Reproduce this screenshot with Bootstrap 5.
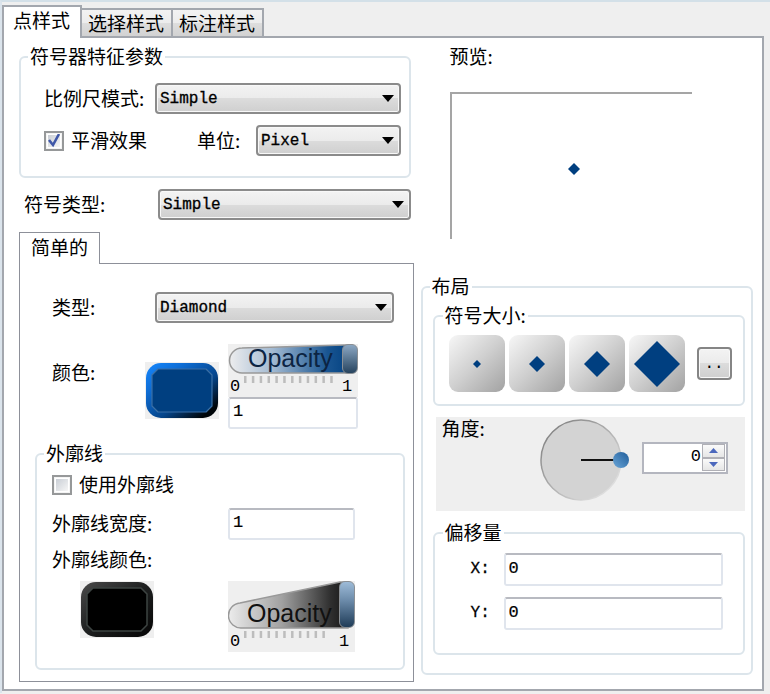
<!DOCTYPE html>
<html lang="zh-CN">
<head>
<meta charset="utf-8">
<meta name="viewport" content="width=device-width, initial-scale=1">
<title>点样式</title>
<link href="https://cdn.jsdelivr.net/npm/bootstrap@5.3.0/dist/css/bootstrap.min.css" rel="stylesheet">
<style>
  :root { --edge: #a3a7ae; --soft: #dce5eb; --ink: #003f80; --mono: "Liberation Mono", "Noto Sans CJK SC", monospace; }
  body { background: #efefef; color: #000; font: 19px/22px "Noto Sans CJK SC", sans-serif; border-left: 2px solid #dbe4ec; border-top: 2px solid #d3e0e8; padding: 3px 6px 2px 0; }
  button { color: #000; }
  label { padding-bottom: 2px; }

  .tab-btn { border: 2px solid var(--edge); border-bottom: 0; border-left-width: 0; background: linear-gradient(#f3f3f3, #ececec 50%, #dedede 50%, #d2d2d2); height: 28px; padding: 0 7px 0 6px; line-height: 24px; }
  .tab-btn.is-active { background: #fff; border-left-width: 2px; height: 33px; margin-bottom: -2px; padding: 0 10px 5px 9px; }
  .page { background: #fff; border: 2px solid var(--edge); padding: 7px 9px 7px 15px; display: grid; grid-template-columns: minmax(0, 394fr) minmax(0, 332fr); column-gap: 7px; }

  .group { border: 2px solid var(--soft); border-radius: 6px; padding: 0 8px 0 7px; min-width: 0; margin: 0; }
  .group > legend { float: none; width: auto; font-size: 19px; line-height: 22px; padding: 0 2px 2px; margin: 0; }
  .symbolizer { margin-right: 3px; }
  .symbolizer-body { padding: 14px 0 20px 16px; row-gap: 11px; }
  .type-row { margin: 11px 3px 0 0; padding-left: 5px; }
  .w-scale { width: 111px; } .w-smooth { width: 153px; } .w-unit { width: 59px; }
  .w-type { width: 134px; } .w-shape { width: 103px; } .w-color { width: 93px; } .w-line { width: 176px; }

  .drop { appearance: none; flex: 1 1 0; min-width: 0; height: 31px; border: 2px solid #8b8b8b; border-radius: 4px; padding: 0 24px 0 3px; font: 16px/24px var(--mono); color: #000; -webkit-text-stroke: .3px #000;
    background: url("data:image/svg+xml,%3Csvg xmlns='http://www.w3.org/2000/svg' width='12' height='7'%3E%3Cpath d='M0 0h12L6 7z'/%3E%3C/svg%3E") no-repeat right 5px center, linear-gradient(#f3f3f3, #ebebeb 50%, #dcdcdc 50%, #cfcfcf); box-shadow: inset 0 0 0 1px #f8f8f8; }
  .tick { appearance: none; flex: none; width: 20px; height: 20px; margin: 0; border: 2px solid #969899; background: linear-gradient(135deg, #c9ced5, #f6f6f6) content-box; padding: 2px; box-shadow: inset 0 0 0 1px #f4f4f4; }
  .tick:checked { background: url("data:image/svg+xml,%3Csvg xmlns='http://www.w3.org/2000/svg' viewBox='0 0 16 16'%3E%3Cpath d='M3 7l4 5 6-11' fill='none' stroke='%233f57a8' stroke-width='2.6'/%3E%3C/svg%3E") center / 16px no-repeat, linear-gradient(135deg, #c9ced5, #f6f6f6) content-box; }
  .tick + label { margin-left: 7px; }
  .field { border: 2px solid #e0e5ed; border-top-color: #b8bac1; border-radius: 3px; padding: 0 3px 3px; height: 32px; font: 17px/24px var(--mono); color: #000; background: #fff; min-width: 0; -webkit-text-stroke: .2px #000; }

  .inner-tab { background: #fff; border: 1px solid #8d9099; border-bottom: 0; width: 81px; height: 32px; margin: 12px 0 -1px; position: relative; padding: 0 0 3px; }
  .inner-page { border: 1px solid #8d9099; padding: 28px 8px 11px 15px; }
  .shape-row { padding: 0 11px 0 17px; }
  .color-row { padding: 21px 0 13px 17px; }
  .color-row > label { padding-top: 17px; }
  .color-row > .swatch { margin: 18px 9px 0 0; }
  .swatch { border: 0; padding: 0; background: #efefef; width: 74px; height: 57px; flex: none; }
  .swatch svg, .fader svg, .size-btn svg { display: block; }
  .outline-body { padding: 7px 0 16px 8px; }
  .row-width { margin-top: 11px; } .row-lc { margin-top: 8px; } .row-fader { margin: 9px 0 0 28px; }
  .row-fader .swatch { margin-right: 74px; }
  .num-130 { width: 130px; } .num-127 { width: 127px; }

  .fader { position: relative; background: #efefef; }
  .fader input { appearance: none; position: absolute; left: 0; top: 0; width: 100%; background: none; margin: 0; }
  .fader input::-webkit-slider-thumb { appearance: none; width: 16px; height: 30px; border-radius: 6px; border: 1px solid #8a8f94; background: linear-gradient(#8ba7c3, #27445f); }
  .fader.tall input::-webkit-slider-thumb { height: 47px; background: linear-gradient(#9dbbd8, #6d8cab 40%, #1f3c58); }

  .preview { margin: 25px 61px 36px 29px; height: 147px; border: solid #a5a5a5; border-width: 2px 0 0 2px; padding: 5px 0 0 4px; }
  .preview-label { margin-left: 29px; }
  .layout { padding: 0 6px 18px 7px; }
  .layout-body { padding-left: 3px; }
  .sub { padding: 0 8px; }
  .sizes { margin-top: 5px; }
  .size-row { padding: 7px 0 12px 6px; gap: 4px; }
  .size-btn { width: 56px; height: 57px; border: 0; padding: 0; border-radius: 9px; background: linear-gradient(135deg, #f7f7f7, #cfcfcf 50%, #a2a2a2); display: flex; align-items: center; justify-content: center; }
  .more-btn { width: 35px; height: 33px; margin-left: 8px; padding: 0; border: 2px solid #858585; border-radius: 4px; background: linear-gradient(#f3f3f3, #ebebeb 50%, #dcdcdc 50%, #cfcfcf); font: 16px/22px var(--mono); box-shadow: inset 0 0 0 1px #f8f8f8; }
  .angle { background: #efefef; height: 94px; margin: 11px 0 10px 3px; padding: 0 17px 0 6px; }
  .dial { position: relative; width: 90px; height: 82px; margin: 2px 12px 0 auto; }
  .dial input { position: absolute; inset: 0; opacity: 0; width: 100%; height: 100%; }
  .spin { width: 86px; height: 32px; border: 2px solid #b4b6bf; background: #fff; margin-top: 25px; }
  .spin input { width: 58px; border: 0; padding: 0 1px 3px 0; text-align: right; font: 17px/22px var(--mono); background: none; }
  .spin-keys { width: 23px; height: 27px; }
  .spin-keys button { flex: 1 1 0; padding: 0; line-height: 0; background: linear-gradient(#fafafa, #e6e6e6); border: 1px solid #b0b0b6; }
  .offsets { padding: 8px 12px 23px; row-gap: 11px; }
  .offsets label { width: 49px; padding-left: 16px; font: 16px/22px var(--mono); -webkit-text-stroke: .3px #000; }
  .offsets .field { height: 33px; flex: 1 1 0; }
</style>
<script src="https://cdn.jsdelivr.net/npm/bootstrap@5.3.0/dist/js/bootstrap.bundle.min.js"></script>
</head>
<body>
<div class="d-flex align-items-end" role="tablist">
  <button class="tab-btn is-active" role="tab" aria-selected="true">点样式</button>
  <button class="tab-btn" role="tab">选择样式</button>
  <button class="tab-btn" role="tab">标注样式</button>
</div>
<main class="page">
  <section>
    <fieldset class="group symbolizer">
      <legend>符号器特征参数</legend>
      <div class="symbolizer-body d-flex flex-column">
        <div class="d-flex align-items-center">
          <label class="w-scale" for="scale">比例尺模式:</label>
          <select class="drop" id="scale"><option>Simple</option></select>
        </div>
        <div class="d-flex align-items-center">
          <div class="w-smooth d-flex align-items-center">
            <input class="tick" type="checkbox" id="smooth" checked><label for="smooth">平滑效果</label>
          </div>
          <label class="w-unit" for="unit">单位:</label>
          <select class="drop" id="unit"><option>Pixel</option></select>
        </div>
      </div>
    </fieldset>

    <div class="type-row d-flex align-items-center">
      <label class="w-type" for="symtype">符号类型:</label>
      <select class="drop" id="symtype"><option>Simple</option></select>
    </div>

    <button class="inner-tab d-block" role="tab" aria-selected="true">简单的</button>
    <div class="inner-page">
      <div class="shape-row d-flex align-items-center">
        <label class="w-shape" for="shape">类型:</label>
        <select class="drop" id="shape"><option>Diamond</option></select>
      </div>
      <div class="color-row d-flex align-items-start">
        <label class="w-color" for="fill">颜色:</label>
        <button class="swatch" id="fill" aria-label="颜色">
          <svg width="74" height="57" viewBox="0 0 74 57">
            <defs><linearGradient id="rimA" x1="0" y1="0" x2="1" y2="1"><stop offset="0" stop-color="#1688ff"/><stop offset=".25" stop-color="#0f6fd8"/><stop offset=".6" stop-color="#054489"/><stop offset=".88" stop-color="#000509"/></linearGradient></defs>
            <rect x="1" y="1" width="72" height="55" rx="15" fill="url(#rimA)"/>
            <path d="M13 7H61L67 13V44L61 50H13L7 44V13Z" fill="#003f80" stroke="#3a6fa5" stroke-width="1.2" stroke-linejoin="round"/>
          </svg>
        </button>
        <div class="d-flex flex-column num-130">
          <div class="fader">
            <svg width="130" height="53" viewBox="0 0 130 53">
              <defs><linearGradient id="fadeA"><stop offset="0" stop-color="#ededee"/><stop offset=".35" stop-color="#a3bad2"/><stop offset=".8" stop-color="#195591"/><stop offset="1" stop-color="#003f80"/></linearGradient></defs>
              <path d="M14 4L116 1H124V29H14A12.500 12.500 0 0 1 14 4Z" fill="url(#fadeA)" stroke="#999" stroke-width="1.5"/>
              <text x="20" y="23" font-family="Liberation Sans, Arial, sans-serif" font-size="25" fill="#0c2443">Opacity</text>
              <path d="M16 35.500H106" stroke="#bdbdbd" stroke-width="7" stroke-dasharray="2.500 5.340"/>
              <text x="2" y="47" font-family="Liberation Mono, monospace" font-size="17">0</text>
              <text x="114" y="47" font-family="Liberation Mono, monospace" font-size="17">1</text>
            </svg>
            <input type="range" min="0" max="1" step="0.01" value="1" aria-label="Opacity">
          </div>
          <input class="field w-100" type="text" value="1" aria-label="Opacity">
        </div>
      </div>

      <fieldset class="group">
        <legend>外廓线</legend>
        <div class="outline-body">
          <div class="d-flex align-items-center">
            <input class="tick" type="checkbox" id="useline"><label for="useline">使用外廓线</label>
          </div>
          <div class="row-width d-flex align-items-center">
            <label class="w-line" for="linew">外廓线宽度:</label>
            <input class="field num-127" type="text" id="linew" value="1">
          </div>
          <label class="row-lc d-block" for="linec">外廓线颜色:</label>
          <div class="row-fader d-flex align-items-start">
            <button class="swatch" id="linec">
              <svg width="74" height="57" viewBox="0 0 74 57">
                <defs><linearGradient id="rimB" x1="0" y1="0" x2="1" y2="1"><stop offset="0" stop-color="#4a4a4a"/><stop offset=".5" stop-color="#1d1f1f"/><stop offset="1" stop-color="#050505"/></linearGradient></defs>
                <rect x="1" y="1" width="72" height="55" rx="15" fill="url(#rimB)"/>
                <path d="M13 7H61L67 13V44L61 50H13L7 44V13Z" stroke="#3d4442" stroke-width="1.5" stroke-linejoin="round"/>
              </svg>
            </button>
            <div class="fader tall num-127">
              <svg width="127" height="71" viewBox="0 0 127 71">
                <defs><linearGradient id="fadeB"><stop offset="0" stop-color="#ececec"/><stop offset=".45" stop-color="#a0a0a0"/><stop offset=".85" stop-color="#303030"/><stop offset="1" stop-color="#151515"/></linearGradient></defs>
                <path d="M12 22L112 1H120V47H14A12.500 12.500 0 0 1 12 22Z" fill="url(#fadeB)" stroke="#999" stroke-width="1.500"/>
                <text x="19" y="41" font-family="Liberation Sans, Arial, sans-serif" font-size="25" fill="#111">Opacity</text>
                <path d="M16 53.500H98" stroke="#bdbdbd" stroke-width="7" stroke-dasharray="2.500 5.340"/>
                <text x="2" y="65" font-family="Liberation Mono, monospace" font-size="17">0</text>
                <text x="111" y="65" font-family="Liberation Mono, monospace" font-size="17">1</text>
              </svg>
              <input type="range" min="0" max="1" step="0.01" value="1" aria-label="Opacity">
            </div>
          </div>
        </div>
      </fieldset>
    </div>
  </section>

  <section>
    <div class="preview-label">预览:</div>
    <div class="preview d-flex align-items-center justify-content-center">
      <svg width="12" height="12" viewBox="0 0 12 12"><path d="M6 0L12 6L6 12L0 6Z" fill="#003f80"/></svg>
    </div>

    <fieldset class="group layout">
      <legend>布局</legend>
      <div class="layout-body">
        <fieldset class="group sub sizes">
          <legend>符号大小:</legend>
          <div class="size-row d-flex align-items-center">
            <button class="size-btn" aria-label="1"><svg width="8" height="8" viewBox="0 0 8 8"><path d="M4 0L8 4L4 8L0 4Z" fill="#003f80"/></svg></button>
            <button class="size-btn" aria-label="2"><svg width="16" height="16" viewBox="0 0 16 16"><path d="M8 0L16 8L8 16L0 8Z" fill="#003f80"/></svg></button>
            <button class="size-btn" aria-label="3"><svg width="26" height="26" viewBox="0 0 26 26"><path d="M13 0L26 13L13 26L0 13Z" fill="#003f80"/></svg></button>
            <button class="size-btn" aria-label="4"><svg width="46" height="46" viewBox="0 0 46 46"><path d="M23 0L46 23L23 46L0 23Z" fill="#003f80"/></svg></button>
            <button class="more-btn">..</button>
          </div>
        </fieldset>

        <div class="angle d-flex align-items-start">
          <label for="angle">角度:</label>
          <div class="dial">
            <svg class="d-block" width="90" height="82" viewBox="0 0 90 82">
              <defs>
                <linearGradient id="dialRim" x1="0" y1="0" x2="1" y2="1"><stop offset="0" stop-color="#777"/><stop offset=".5" stop-color="#b0b0b0"/><stop offset=".9" stop-color="#e4e4e4"/></linearGradient>
                <linearGradient id="knob" x1="1" y1="0" x2="0" y2="1"><stop offset="0" stop-color="#1f5c99"/><stop offset="1" stop-color="#6aa6d8"/></linearGradient>
              </defs>
              <circle cx="41" cy="41" r="40" fill="#d3d3d3" stroke="url(#dialRim)" stroke-width="1.500"/>
              <path d="M41 41H76" stroke="#111" stroke-width="2"/>
              <circle cx="81" cy="41" r="8" fill="url(#knob)"/>
            </svg>
            <input type="range" min="0" max="360" value="0" aria-label="角度">
          </div>
          <div class="spin d-flex flex-shrink-0">
            <input type="text" id="angle" value="0">
            <div class="spin-keys d-flex flex-column">
              <button aria-label="+"><svg width="9" height="5" viewBox="0 0 9 5"><path d="M0 5L4.500 0L9 5Z" fill="#4c68bd"/></svg></button>
              <button aria-label="-"><svg width="9" height="5" viewBox="0 0 9 5"><path d="M0 0H9L4.500 5Z" fill="#4c68bd"/></svg></button>
            </div>
          </div>
        </div>

        <fieldset class="group sub">
          <legend>偏移量</legend>
          <div class="offsets d-flex flex-column">
            <div class="d-flex align-items-center"><label for="offx">X:</label><input class="field" type="text" id="offx" value="0"></div>
            <div class="d-flex align-items-center"><label for="offy">Y:</label><input class="field" type="text" id="offy" value="0"></div>
          </div>
        </fieldset>
      </div>
    </fieldset>
  </section>
</main>
</body>
</html>
